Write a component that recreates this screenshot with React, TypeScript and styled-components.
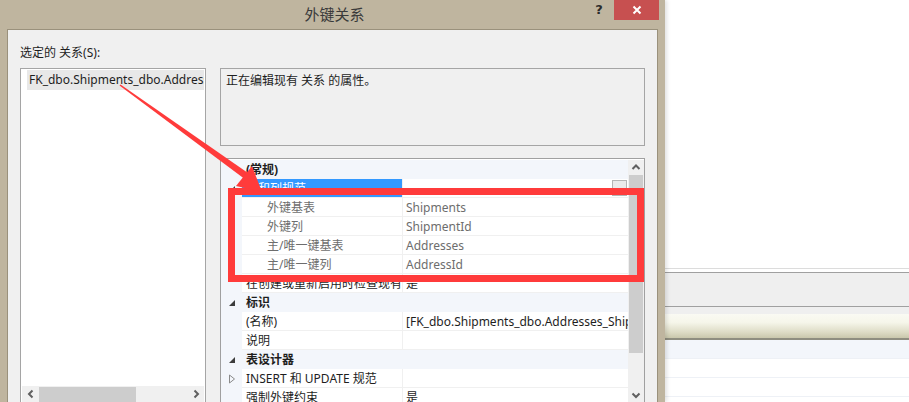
import React from "react";
import styled, { createGlobalStyle } from "styled-components";

const GlobalStyle = createGlobalStyle`
  html, body { margin: 0; padding: 0; background: #ffffff; }
  body { width: 909px; height: 402px; overflow: hidden; }
  * { box-sizing: border-box; }
`;

const FONT = `"Noto Sans", "Noto Sans CJK SC", sans-serif`;

const Page = styled.div`
  position: relative;
  width: 909px;
  height: 402px;
  overflow: hidden;
  display: flex;
  font-family: ${FONT};
  font-size: 12px;
  color: #1e1e1e;
`;

const Window = styled.div`
  width: 665px;
  height: 402px;
  flex: none;
  background: #bfb59f;
  display: flex;
  flex-direction: column;
  padding: 0 7px 0 7px;
  box-shadow: 2px 0 4px rgba(0, 0, 0, 0.12);
  position: relative;
  z-index: 1;
`;

const TitleBar = styled.div`
  height: 29px;
  flex: none;
  display: flex;
  align-items: flex-start;
  position: relative;
`;

const Title = styled.div`
  position: absolute;
  left: 0;
  right: 0;
  top: 4px;
  text-align: center;
  font-size: 15px;
  line-height: 20px;
  color: #3a3a3a;
  padding-left: 4px;
`;

const Controls = styled.div`
  margin-left: auto;
  display: flex;
  align-items: flex-start;
  margin-right: -1px;
`;

const HelpButton = styled.div`
  width: 30px;
  height: 20px;
  font-family: "DejaVu Sans", sans-serif;
  font-weight: bold;
  font-size: 13px;
  line-height: 20px;
  text-align: center;
  color: #2b2b2b;
`;

const CloseButton = styled.div`
  width: 45px;
  height: 20px;
  background: #c75050;
  display: flex;
  align-items: center;
  justify-content: center;
`;

const Client = styled.div`
  flex: 1;
  background: #f0f0f0;
  border: 1px solid #9a917c;
  border-bottom: none;
  padding: 14px 0 0 12px;
  display: grid;
  grid-template-columns: 186px 425px;
  grid-template-rows: 16px 1fr;
  column-gap: 14px;
  row-gap: 8px;
  min-height: 0;
`;

const Label = styled.div`
  grid-column: 1 / 3;
  line-height: 17px;
  color: #1e1e1e;
`;

const ListBox = styled.div`
  background: #ffffff;
  border: 1px solid #a5a5a5;
  border-bottom: none;
  display: flex;
  flex-direction: column;
  padding: 1px 1px 0 1px;
  min-height: 0;
`;

const ListItem = styled.div`
  margin-left: 5px;
  height: 20px;
  line-height: 20px;
  background: #e8e8e8;
  padding-left: 2px;
  white-space: nowrap;
  overflow: hidden;
`;

const ListSpacer = styled.div`
  flex: 1;
`;

const HScroll = styled.div`
  height: 16px;
  background: #f0f0f0;
  display: flex;
  align-items: center;
  flex: none;
`;

const ScrollArrow = styled.div`
  width: 17px;
  height: 16px;
  display: flex;
  align-items: center;
  justify-content: center;
  flex: none;
`;

const HThumb = styled.div`
  width: 97px;
  height: 15px;
  background: #cdcdcd;
`;

const ScrollTrack = styled.div`
  flex: 1;
`;

const RightColumn = styled.div`
  display: flex;
  flex-direction: column;
  gap: 12px;
  min-height: 0;
`;

const Description = styled.div`
  height: 78px;
  flex: none;
  border: 1px solid #a5a5a5;
  padding: 3px 5px;
  line-height: 18px;
`;

const PropGrid = styled.div`
  flex: 1;
  border: 1px solid #a0a0a0;
  border-bottom: none;
  background: #ffffff;
  display: flex;
  min-height: 0;
  padding-top: 1px;
`;

const Rows = styled.div`
  flex: 1;
  display: flex;
  flex-direction: column;
  min-width: 0;
`;

const PropRow = styled.div<{ $category?: boolean }>`
  height: 19px;
  flex: none;
  display: grid;
  grid-template-columns: 21px 160px 1fr;
  background: ${(p) => (p.$category ? "#f3f6fb" : "#ffffff")};
`;

const Gutter = styled.div`
  background: #f3f6fb;
  display: flex;
  align-items: center;
  justify-content: center;
  padding-left: 1px;
`;

const NameCell = styled.div<{ $category?: boolean; $selected?: boolean; $indent?: boolean; $muted?: boolean }>`
  grid-column: ${(p) => (p.$category ? "2 / 4" : "auto")};
  padding-left: ${(p) => (p.$indent ? "25px" : "4px")};
  padding-top: 1px;
  line-height: 17px;
  white-space: nowrap;
  overflow: hidden;
  font-weight: ${(p) => (p.$category ? "bold" : "normal")};
  background: ${(p) => (p.$selected ? "#3399ff" : "transparent")};
  color: ${(p) => (p.$selected ? "#ffffff" : p.$muted ? "#6d6d6d" : "#1e1e1e")};
  border-bottom: 1px solid ${(p) => (p.$category ? "#f3f6fb" : "#f0f0f0")};
`;

const ValueCell = styled.div<{ $muted?: boolean }>`
  border-left: 1px solid #f0f0f0;
  border-bottom: 1px solid #f0f0f0;
  padding-left: 3px;
  padding-top: 1px;
  line-height: 17px;
  white-space: nowrap;
  overflow: hidden;
  color: ${(p) => (p.$muted ? "#6d6d6d" : "#1e1e1e")};
  display: flex;
  align-items: flex-start;
`;

const EllipsisButton = styled.div`
  margin-left: auto;
  margin-right: 1px;
  width: 15px;
  height: 16px;
  background: #eaeaea;
  border: 1px solid #b4b4b4;
`;

const VScroll = styled.div`
  width: 16px;
  flex: none;
  background: #f0f0f0;
  display: flex;
  flex-direction: column;
`;

const VThumb = styled.div`
  margin: 0 1px 0 1px;
  height: 178px;
  background: #cdcdcd;
  flex: none;
`;

const VArrow = styled.div`
  height: 15px;
  flex: none;
  display: flex;
  align-items: center;
  justify-content: center;
`;

/* Right side (background application) */
const RightPane = styled.div`
  flex: 1;
  display: flex;
  flex-direction: column;
  background: #ffffff;
`;

const BlankArea = styled.div`
  height: 269px;
  flex: none;
  border-bottom: 1px solid #dcdcdc;
`;

const WhiteGap = styled.div`
  height: 3px;
  flex: none;
`;

const ToolStrip = styled.div`
  height: 35px;
  flex: none;
  background: #efefef;
  border-top: 1px solid #a0a0a0;
  border-bottom: 1px solid #a0a0a0;
`;

const GreyGap = styled.div`
  height: 7px;
  flex: none;
  background: #efefef;
`;

const HeaderBar = styled.div`
  height: 26px;
  flex: none;
  background: linear-gradient(#fafaf3 0%, #f6f6ea 35%, #dedcc6 75%, #c9c7ac 100%);
  border-bottom: 2px solid #8f8e80;
`;

const DataRow = styled.div<{ $alt?: boolean }>`
  height: 19px;
  flex: none;
  background: ${(p) => (p.$alt ? "#f3f6fb" : "#ffffff")};
  border-bottom: 1px solid #eef1f6;
`;

const Overlay = styled.svg`
  position: absolute;
  left: 0;
  top: 0;
  width: 909px;
  height: 402px;
  pointer-events: none;
  z-index: 5;
`;

const Chevron = ({ dir }: { dir: "left" | "right" | "up" | "down" }) => {
  const paths: Record<string, string> = {
    left: "M5.5 1.5 L2 5 L5.5 8.5",
    right: "M2.5 1.5 L6 5 L2.5 8.5",
    up: "M1.5 6 L5 2.5 L8.5 6",
    down: "M1.5 3.5 L5 7 L8.5 3.5",
  };
  const vert = dir === "up" || dir === "down";
  return (
    <svg width={vert ? 10 : 8} height={vert ? 9 : 10} viewBox={vert ? "0 0 10 9" : "0 0 8 10"}>
      <path d={paths[dir]} fill="none" stroke="#606060" strokeWidth="2" />
    </svg>
  );
};

const Expanded = () => (
  <svg width="8" height="8" viewBox="0 0 8 8">
    <path d="M7 1 L7 7 L1 7 Z" fill="#3c3c3c" />
  </svg>
);

const Collapsed = () => (
  <svg width="8" height="10" viewBox="0 0 8 10">
    <path d="M1.5 1 L6.5 5 L1.5 9 Z" fill="none" stroke="#8a8a8a" strokeWidth="1" />
  </svg>
);

type Row =
  | { kind: "cat"; name: string }
  | {
      kind: "prop";
      name: string;
      value?: string;
      expander?: "open" | "closed";
      indent?: boolean;
      muted?: boolean;
      selected?: boolean;
      button?: boolean;
    };

const rows: Row[] = [
  { kind: "cat", name: "(常规)" },
  { kind: "prop", name: "表和列规范", expander: "open", selected: true, button: true },
  { kind: "prop", name: "外键基表", value: "Shipments", indent: true, muted: true },
  { kind: "prop", name: "外键列", value: "ShipmentId", indent: true, muted: true },
  { kind: "prop", name: "主/唯一键基表", value: "Addresses", indent: true, muted: true },
  { kind: "prop", name: "主/唯一键列", value: "AddressId", indent: true, muted: true },
  { kind: "prop", name: "在创建或重新启用时检查现有", value: "是" },
  { kind: "cat", name: "标识" },
  { kind: "prop", name: "(名称)", value: "[FK_dbo.Shipments_dbo.Addresses_ShipmentId]" },
  { kind: "prop", name: "说明", value: "" },
  { kind: "cat", name: "表设计器" },
  { kind: "prop", name: "INSERT 和 UPDATE 规范", expander: "closed", value: "" },
  { kind: "prop", name: "强制外键约束", value: "是" },
];

export default function App() {
  return (
    <>
      <GlobalStyle />
      <Page>
        <Window>
          <TitleBar>
            <Title>外键关系</Title>
            <Controls>
              <HelpButton>?</HelpButton>
              <CloseButton>
                <svg width="10" height="10" viewBox="0 0 10 10">
                  <path d="M1.5 1.5 L8.5 8.5 M8.5 1.5 L1.5 8.5" stroke="#ffffff" strokeWidth="2" />
                </svg>
              </CloseButton>
            </Controls>
          </TitleBar>
          <Client>
            <Label>选定的 关系(S):</Label>
            <ListBox>
              <ListItem>FK_dbo.Shipments_dbo.Addresses_ShipmentId</ListItem>
              <ListSpacer />
              <HScroll>
                <ScrollArrow>
                  <Chevron dir="left" />
                </ScrollArrow>
                <HThumb />
                <ScrollTrack />
                <ScrollArrow>
                  <Chevron dir="right" />
                </ScrollArrow>
              </HScroll>
            </ListBox>
            <RightColumn>
              <Description>正在编辑现有 关系 的属性。</Description>
              <PropGrid>
                <Rows>
                  {rows.map((r, i) =>
                    r.kind === "cat" ? (
                      <PropRow key={i} $category>
                        <Gutter>{i > 0 ? <Expanded /> : null}</Gutter>
                        <NameCell $category>{r.name}</NameCell>
                      </PropRow>
                    ) : (
                      <PropRow key={i}>
                        <Gutter>
                          {r.expander === "open" ? <Expanded /> : r.expander === "closed" ? <Collapsed /> : null}
                        </Gutter>
                        <NameCell $selected={r.selected} $indent={r.indent} $muted={r.muted}>
                          {r.name}
                        </NameCell>
                        <ValueCell $muted={r.muted}>
                          {r.value}
                          {r.button ? <EllipsisButton /> : null}
                        </ValueCell>
                      </PropRow>
                    )
                  )}
                </Rows>
                <VScroll>
                  <VArrow>
                    <Chevron dir="up" />
                  </VArrow>
                  <VThumb />
                  <ScrollTrack />
                  <VArrow>
                    <Chevron dir="down" />
                  </VArrow>
                </VScroll>
              </PropGrid>
            </RightColumn>
          </Client>
        </Window>
        <RightPane>
          <BlankArea />
          <WhiteGap />
          <ToolStrip />
          <GreyGap />
          <HeaderBar />
          <DataRow $alt />
          <DataRow />
          <DataRow />
        </RightPane>
        <Overlay viewBox="0 0 909 402">
          <rect x="231.5" y="191.5" width="409" height="87" fill="none" stroke="#ff3b3b" strokeWidth="7" />
          <polygon points="119.5,85.5 120.5,84.5 248,173 244,178.5" fill="#ff3b3b" />
          <polygon points="262,192 236,186 252,166" fill="#ff3b3b" />
        </Overlay>
      </Page>
    </>
  );
}
